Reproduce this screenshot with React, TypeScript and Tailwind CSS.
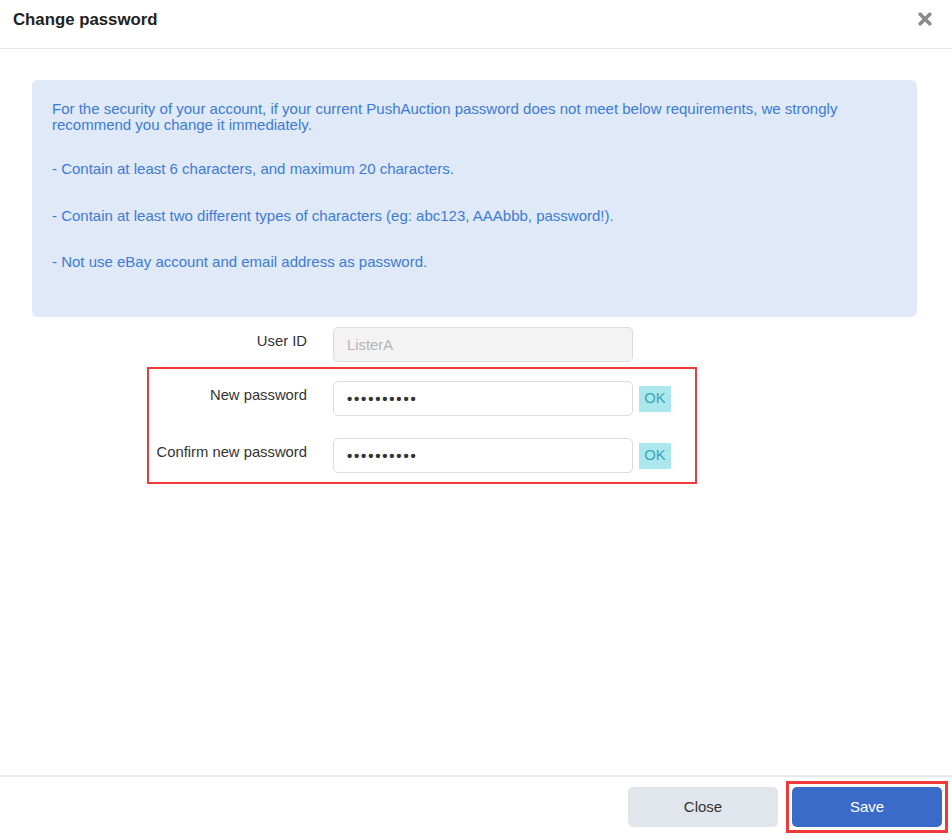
import React from 'react';

const rules = [
  { text: '- Contain at least 6 characters, and maximum 20 characters.', gap: 'mb-[31px]' },
  { text: '- Contain at least two different types of characters (eg: abc123, AAAbbb, password!).', gap: 'mb-[30px]' },
  { text: '- Not use eBay account and email address as password.', gap: 'mb-0' },
];

const Row = ({ label, children }: { label: string; children: React.ReactNode }) => (
  <div className="flex items-start">
    <label className="w-[158px] shrink-0 pt-[4px] text-right text-[14.8px] leading-[20px] text-[#333]">{label}</label>
    <div className="ml-[26px] flex items-center">{children}</div>
  </div>
);

const OkBadge = () => (
  <span className="ml-[6px] flex h-[26px] w-[32px] items-center justify-center bg-[#ade7ee] text-[14.8px] text-[#3aa5b5]">OK</span>
);

const PasswordInput = () => (
  <input
    type="text"
    readOnly
    value="••••••••••"
    className="h-[35px] w-[300px] rounded-[5px] border border-[#dcdcdc] bg-white px-[13px] text-[15px] font-bold tracking-[1.8px] text-[#333] outline-none"
  />
);

export default function App() {
  return (
    <div className="flex h-[840px] w-[952px] flex-col bg-white font-['Liberation_Sans',Arial,sans-serif]">
      {/* Header */}
      <div className="flex h-[49px] shrink-0 items-center justify-between border-b border-[#e5e5e5] pl-[13px] pr-[20px]">
        <h1 className="pb-[9px] text-[16.8px] font-bold text-[#222]">Change password</h1>
        <button className="pb-[10px] text-[#8a8a8a]">
          <svg width="14" height="14" viewBox="0 0 14 14" fill="none" stroke="currentColor" strokeWidth="3.6" strokeLinecap="round">
            <path d="M2.2 2.2 L11.8 11.8 M11.8 2.2 L2.2 11.8" />
          </svg>
        </button>
      </div>

      {/* Body */}
      <div className="flex-1 pl-[32px] pr-[35px] pt-[31px]">
        <div className="rounded-[6px] bg-[#dfe9f7] px-[20px] pb-[47px] pt-[21px] text-[15px] leading-[16px] text-[#3d7bd6]">
          <p className="mb-[28px]">
            For the security of your account, if your current PushAuction password does not meet below requirements, we strongly
            <br />
            recommend you change it immediately.
          </p>
          {rules.map((r) => (
            <p key={r.text} className={r.gap}>{r.text}</p>
          ))}
        </div>

        <div className="ml-[115px] mt-[8px] w-[550px]">
          <div className="border-2 border-transparent">
            <Row label="User ID">
              <input
                type="text"
                readOnly
                value="ListerA"
                className="h-[35px] w-[300px] rounded-[5px] border border-[#dcdcdc] bg-[#f3f3f3] px-[13px] text-[14.8px] text-[#b5b5b5] outline-none"
              />
            </Row>
          </div>
          <div className="mt-[3px] flex flex-col gap-[22px] border-2 border-[#f03a3a] pb-[9px] pt-[12px]">
            <Row label="New password">
              <PasswordInput />
              <OkBadge />
            </Row>
            <Row label="Confirm new password">
              <PasswordInput />
              <OkBadge />
            </Row>
          </div>
        </div>
      </div>

      {/* Footer */}
      <div className="flex h-[65px] shrink-0 items-start justify-end gap-[8px] border-t-2 border-[#e8e8e8] pr-[4px] pt-[4px]">
        <button className="mt-[6px] h-[40px] w-[150px] rounded-[5px] bg-[#e1e5ec] text-[15px] text-[#333]">Close</button>
        <div className="border-[3px] border-[#f03a3a] p-[3px]">
          <button className="h-[40px] w-[150px] rounded-[5px] bg-[#3b6bc9] text-[15px] text-white">Save</button>
        </div>
      </div>
    </div>
  );
}
